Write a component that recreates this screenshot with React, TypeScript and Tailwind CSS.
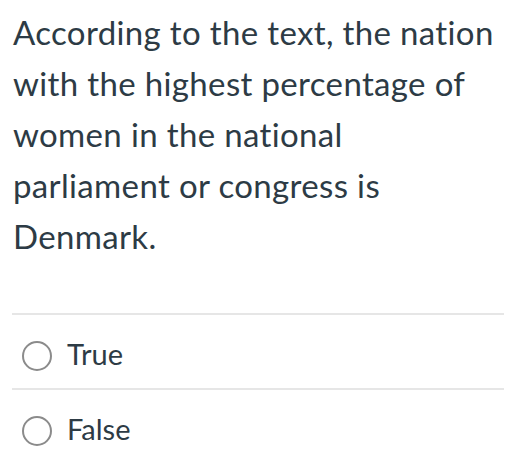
import React from 'react';

const options = ['True', 'False'];

const App: React.FC = () => {
  return (
    <div className="w-[513px] h-[470px] bg-white text-[#2d3b45] font-['Lato',sans-serif] overflow-hidden">
      <p className="pl-[13px] pr-[8px] pt-[7px] text-[33px] leading-[51px] tracking-[0.35px]">
        According to the text, the nation with the highest percentage of women in the national parliament or congress is
        Denmark.
      </p>
      <div className="mt-[51px] ml-3 mr-[9px]">
        {options.map((opt) => (
          <div key={opt} className="border-t-2 border-[#e6e6e6]">
            <label className="flex items-center gap-[15px] pl-[10px] pt-[26px] pb-[17px] text-[29px] leading-[30px]">
              <span className="w-[30px] h-[30px] rounded-full border-2 border-[#8b8b8b] shrink-0" />
              <span className="relative -top-[2px]">{opt}</span>
            </label>
          </div>
        ))}
      </div>
    </div>
  );
};

export default App;
